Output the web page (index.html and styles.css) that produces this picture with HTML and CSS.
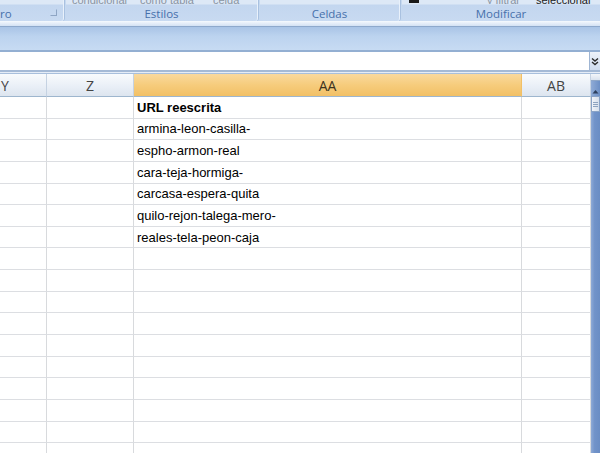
FILE: index.html
```html
<!DOCTYPE html>
<html>
<head>
<meta charset="utf-8">
<link rel="stylesheet" href="styles.css">
</head>
<body>
<div class="app">
  <div class="ribbon">
    <div class="group g1">
      <div class="tops"></div>
      <div class="label l1"><span>ro</span><span class="launcher"></span></div>
    </div>
    <div class="group g2">
      <div class="tops"><span class="t gray w1">condicional</span><span class="t gray w2">como tabla</span><span class="t gray w3">celda</span></div>
      <div class="label">Estilos</div>
    </div>
    <div class="group g3">
      <div class="tops"></div>
      <div class="label">Celdas</div>
    </div>
    <div class="group g4">
      <div class="tops"><span class="blk"></span><span class="t gray w4">y filtrar</span><span class="t dark">seleccionar</span></div>
      <div class="label">Modificar</div>
    </div>
  </div>
  <div class="ribbon-gap"></div>
  <div class="band"></div>
  <div class="formula">
    <div class="fx"></div>
    <div class="expand">
      <svg width="8" height="9" viewBox="0 0 8 9"><path d="M1 1.5 L4 4 L7 1.5 M1 5 L4 7.5 L7 5" fill="none" stroke="#2b2b2b" stroke-width="1.4"/></svg>
    </div>
  </div>
  <div class="formula-gap"></div>
  <div class="sheet-wrap">
    <div class="sheet">
      <div class="hd hy">Y</div><div class="hd">Z</div><div class="hd sel">AA</div><div class="hd">AB</div>
      <div class="c"></div><div class="c"></div><div class="c b">URL reescrita</div><div class="c"></div>
      <div class="c"></div><div class="c"></div><div class="c">armina-leon-casilla-</div><div class="c"></div>
      <div class="c"></div><div class="c"></div><div class="c">espho-armon-real</div><div class="c"></div>
      <div class="c"></div><div class="c"></div><div class="c">cara-teja-hormiga-</div><div class="c"></div>
      <div class="c"></div><div class="c"></div><div class="c">carcasa-espera-quita</div><div class="c"></div>
      <div class="c"></div><div class="c"></div><div class="c">quilo-rejon-talega-mero-</div><div class="c"></div>
      <div class="c"></div><div class="c"></div><div class="c">reales-tela-peon-caja</div><div class="c"></div>
      <div class="c"></div><div class="c"></div><div class="c"></div><div class="c"></div>
      <div class="c"></div><div class="c"></div><div class="c"></div><div class="c"></div>
      <div class="c"></div><div class="c"></div><div class="c"></div><div class="c"></div>
      <div class="c"></div><div class="c"></div><div class="c"></div><div class="c"></div>
      <div class="c"></div><div class="c"></div><div class="c"></div><div class="c"></div>
      <div class="c"></div><div class="c"></div><div class="c"></div><div class="c"></div>
      <div class="c"></div><div class="c"></div><div class="c"></div><div class="c"></div>
      <div class="c"></div><div class="c"></div><div class="c"></div><div class="c"></div>
      <div class="c"></div><div class="c"></div><div class="c"></div><div class="c"></div>
      <div class="c"></div><div class="c"></div><div class="c"></div><div class="c"></div>
    </div>
    <div class="vscroll">
      <div class="split"></div>
      <div class="up"><svg width="7" height="5" viewBox="0 0 7 5"><path d="M0.5 4.5 L3.5 1 L6.5 4.5 Z" fill="#2d3f5c"/></svg></div>
      <div class="thumb"><span></span><span></span><span></span></div>
      <div class="track"></div>
    </div>
  </div>
</div>
</body>
</html>
```

FILE: styles.css
```css
html, body {
  margin: 0;
  padding: 0;
  width: 600px;
  height: 453px;
  overflow: hidden;
  background: #ffffff;
}

.app {
  width: 600px;
  height: 453px;
  display: flex;
  flex-direction: column;
  overflow: hidden;
  font-family: "Liberation Sans", Arial, sans-serif;
}

/* ribbon */
.ribbon {
  height: 21px;
  display: flex;
  background: #c6d9f0;
  gap: 2px;
}

.group {
  display: flex;
  flex-direction: column;
  background: linear-gradient(#dde8f6 0, #dde8f6 4px, #c3d6ef 5px, #c8daf1 100%);
  border-right: 1px solid #e9f1fb;
  box-shadow: 1px 0 0 #a9c1e0;
  border-radius: 0 0 3px 3px;
}

.g1 { width: 63px; }
.g2 { width: 191px; }
.g3 { width: 139px; }
.g4 { flex: 1; border-right: none; box-shadow: none; }

.tops {
  height: 4px;
  overflow: hidden;
  display: flex;
  align-items: flex-start;
  font-size: 11px;
}

.tops .t {
  display: block;
  height: 4px;
  line-height: 0;
  overflow: hidden;
  white-space: nowrap;
}

.gray { color: #8a94a2; }
.dark { color: #1b1b1b; }

.g2 .tops { padding-left: 6px; }
.w1 { width: 68px; }
.w2 { width: 73px; }
.w3 { width: 30px; }

.g4 .tops { padding-left: 7px; }
.blk {
  display: block;
  width: 10px;
  height: 3px;
  background: #1a1a1a;
  margin-right: 68px;
}
.w4 { width: 49px; }

.label {
  flex: 1;
  display: flex;
  align-items: center;
  justify-content: center;
  font-family: "Open Sans", "DejaVu Sans", sans-serif;
  font-size: 11.5px;
  color: #4670ab;
  padding-top: 1px;
}

.l1 {
  justify-content: space-between;
  padding-right: 6px;
}

.launcher {
  width: 5px;
  height: 5px;
  border: 1px solid #8ea5c4;
  border-left-color: transparent;
  border-top-color: transparent;
  margin-bottom: 2px;
}

.ribbon-gap {
  height: 4px;
  background: linear-gradient(#eef4fb, #d3e2f4);
  border-top: 1px solid #f2f7fc;
}

.band {
  height: 23px;
  background: linear-gradient(#a9c4e6, #bcd3ef 40%, #c7dbf3);
  border-top: 1px solid #8ea9cc;
  border-bottom: 2px solid #93afd2;
}

.formula {
  height: 18px;
  display: flex;
  background: #ffffff;
  border-bottom: 2px solid #a5bad6;
}

.fx { flex: 1; }

.expand {
  width: 10px;
  background: linear-gradient(#eef3fa, #cfdcee);
  border-left: 1px solid #9fb5d3;
  display: flex;
  align-items: center;
  justify-content: center;
}

.formula-gap {
  height: 1px;
  background: #e6edf7;
}

/* sheet */
.sheet-wrap {
  flex: 1;
  display: flex;
  overflow: hidden;
  border-top: 1px solid #a8bfdc;
}

.sheet {
  display: grid;
  grid-template-columns: 47px 87px 388px 69px;
  grid-template-rows: 23px;
  grid-auto-rows: 21.65px;
  align-content: start;
}

.hd {
  display: flex;
  align-items: center;
  justify-content: center;
  font-family: "Open Sans", "DejaVu Sans", sans-serif;
  font-size: 14px;
  color: #444444;
  background: linear-gradient(#f9fbfd, #e8eef6 60%, #dde5ef);
  border-right: 1px solid #c5d2e2;
  border-bottom: 1px solid #9eb6ce;
  box-sizing: border-box;
}

.hd.hy {
  justify-content: flex-start;
  padding-left: 1px;
}

.hd.sel {
  background: linear-gradient(#f9d99e, #f6cc7c 50%, #f2c066);
  border-right-color: #f2c066;
  color: #3c3320;
}

.c {
  box-sizing: border-box;
  border-right: 1px solid #d8dadd;
  border-bottom: 1px solid #dcdee2;
  font-size: 13px;
  color: #000000;
  display: flex;
  align-items: center;
  padding: 0 0 0 3px;
  white-space: nowrap;
  overflow: hidden;
}

.c.b { font-weight: bold; }

.vscroll {
  width: 9px;
  display: flex;
  flex-direction: column;
  background: #7193c9;
}

.split {
  height: 6px;
  background: linear-gradient(#f3f6fa, #d9e2ee);
  border-bottom: 1px solid #8fa7c8;
}

.up {
  height: 15px;
  background: linear-gradient(90deg, #8fabd6, #6c8fc5);
  display: flex;
  align-items: flex-end;
  justify-content: center;
  padding-bottom: 2px;
  box-sizing: border-box;
}

.thumb {
  height: 16px;
  background: linear-gradient(90deg, #f1f4f9, #d7e0ec);
  border: 1px solid #8aa3c6;
  box-sizing: border-box;
  display: flex;
  flex-direction: column;
  justify-content: center;
  gap: 1px;
  padding: 0 1px;
}

.thumb span {
  height: 1px;
  background: #8ea3bf;
}

.track {
  flex: 1;
  background: linear-gradient(90deg, #8eaad6, #7193c9 40%, #6a8dc4);
}
```
